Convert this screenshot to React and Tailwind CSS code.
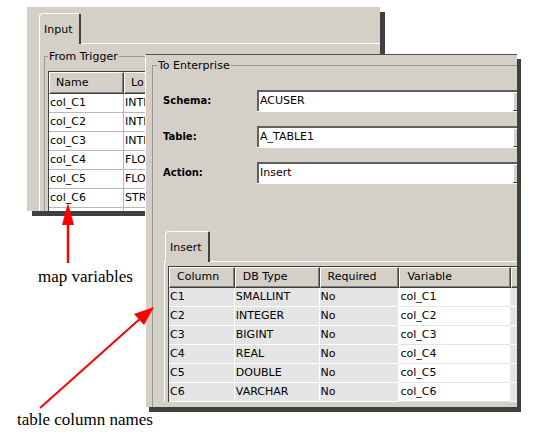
import React from 'react';

const ui = "font-['DejaVu_Sans',sans-serif] text-[11px] text-black";
const headCell = "flex items-center bg-[#d4d0c8] border-t border-l border-white border-r border-b border-r-[#404040] border-b-[#404040] shadow-[inset_-1px_-1px_0_#808080]";

const backRows = [
    ['col_C1', 'INTEGER'],
    ['col_C2', 'INTEGER'],
    ['col_C3', 'INTEGER'],
    ['col_C4', 'FLOAT'],
    ['col_C5', 'FLOAT'],
    ['col_C6', 'STRING'],
    ['', ''],
];

const frontRows = [
    ['C1', 'SMALLINT', 'No', 'col_C1'],
    ['C2', 'INTEGER', 'No', 'col_C2'],
    ['C3', 'BIGINT', 'No', 'col_C3'],
    ['C4', 'REAL', 'No', 'col_C4'],
    ['C5', 'DOUBLE', 'No', 'col_C5'],
    ['C6', 'VARCHAR', 'No', 'col_C6'],
];

const Combo = ({ value }) => (
    <div className="flex h-[21px] w-[272px] bg-white border-t-2 border-l-2 border-t-[#606060] border-l-[#606060] shadow-[0_1px_0_#ffffff]">
        <div className="flex-1 flex items-center pl-[1px]">{value}</div>
        <div className="w-[16px] flex items-center justify-center bg-[#d4d0c8] border-t border-l border-white border-r border-b border-r-[#404040] border-b-[#404040] text-[7px] leading-none">▼</div>
    </div>
);

const Tab = ({ label, w }) => (
    <div className={`relative z-10 -mb-px h-[31px] ${w} bg-[#d4d0c8] border-l border-t border-white border-r-2 border-r-[#404040] rounded-tl-[4px] rounded-tr-[2px] px-[4px] pt-[8px]`}>
        {label}
    </div>
);

const BackWindow = () => (
    <div className={`absolute left-[27px] top-[7px] w-[353px] h-[204px] bg-[#d4d0c8] shadow-[5px_5px_0_#404040] overflow-hidden ${ui}`}>
        <div className="pl-[12px] pt-[6px]">
            <Tab label="Input" w="w-[42px]" />
            <div className="h-[200px] border-l border-t border-white pl-[4px] pt-[6px]">
                <fieldset className="border border-[#9a978f] pl-[3px] h-[220px] w-[360px]">
                    <legend className="px-[1px] leading-[13px]">From Trigger</legend>
                    <div className="mt-[8px] w-[300px] bg-white border-t border-l border-[#404040]">
                        <div className="flex h-[22px]">
                            <div className={`${headCell} w-[75px] pl-[6px]`}>Name</div>
                            <div className={`${headCell} w-[100px] pl-[6px]`}>Lo</div>
                        </div>
                        {backRows.map((r, i) => (
                            <div key={i} className="flex h-[19px] border-b border-[#b8b8b8]">
                                <div className="w-[75px] pl-[1px] flex items-center border-r border-[#b8b8b8]">{r[0]}</div>
                                <div className="w-[100px] pl-[1px] flex items-center border-r border-[#b8b8b8]">{r[1]}</div>
                            </div>
                        ))}
                    </div>
                </fieldset>
            </div>
        </div>
    </div>
);

const FrontWindow = () => (
    <div className={`absolute left-[145px] top-[54px] w-[372px] h-[353px] bg-[#d4d0c8] border-t border-t-[#505050] border-l border-l-white shadow-[4px_5px_0_#404040] overflow-hidden ${ui}`}>
        <div className="pl-[6px] pt-[4px]">
            <fieldset className="border border-[#9a978f] shadow-[1px_1px_0_#ffffff] w-[420px] h-[400px] pl-[10px]">
                <legend className="px-[1px] -ml-[6px] leading-[13px]">To Enterprise</legend>
                <div className="mt-[18px] flex flex-col gap-[15px]">
                    {[['Schema:', 'ACUSER'], ['Table:', 'A_TABLE1'], ['Action:', 'Insert']].map(([l, v]) => (
                        <div key={l} className="flex items-center">
                            <div className="w-[94px] font-bold text-[10px]">{l}</div>
                            <Combo value={v} />
                        </div>
                    ))}
                </div>
                <div className="mt-[48px] ml-[1px]">
                    <div className="pl-[1px]">
                        <Tab label="Insert" w="w-[45px]" />
                    </div>
                    <div className="border-l border-t border-white pl-[3px] pt-[4px]">
                        <div className="w-[380px] border-t border-l border-[#404040]">
                            <div className="flex h-[21px]">
                                <div className={`${headCell} w-[66px] pl-[7px]`}>Column</div>
                                <div className={`${headCell} w-[85px] pl-[7px]`}>DB Type</div>
                                <div className={`${headCell} w-[80px] pl-[7px]`}>Required</div>
                                <div className={`${headCell} w-[112px] pl-[7px]`}>Variable</div>
                                <div className={`${headCell} w-[37px]`}></div>
                            </div>
                            {frontRows.map((r, i) => (
                                <div key={i} className="flex h-[19px]">
                                    <div className="w-[66px] pl-[1px] flex items-center bg-[#e4e4e4] border-r border-b border-white">{r[0]}</div>
                                    <div className="w-[85px] pl-[1px] flex items-center bg-[#e4e4e4] border-r border-b border-white">{r[1]}</div>
                                    <div className="w-[80px] pl-[1px] flex items-center bg-[#e4e4e4] border-r border-b border-white">{r[2]}</div>
                                    <div className="w-[112px] pl-[1px] flex items-center bg-white border-r border-b border-[#e4e4e4]">{r[3]}</div>
                                    <div className="w-[37px] bg-[#e4e4e4] border-b border-white"></div>
                                </div>
                            ))}
                        </div>
                    </div>
                </div>
            </fieldset>
        </div>
    </div>
);

export default function App() {
    return (
        <div className="relative w-[540px] h-[435px] bg-white overflow-hidden">
            <BackWindow />
            <FrontWindow />

            {/* annotation arrows */}
            <svg className="absolute inset-0 pointer-events-none" width="540" height="435" viewBox="0 0 540 435">
                <line x1="68" y1="263" x2="68" y2="222" stroke="#ff0000" strokeWidth="2.5" />
                <polygon points="62,225 74,225 68,203" fill="#ff0000" />
                <line x1="40" y1="408" x2="142" y2="317" stroke="#ff0000" strokeWidth="2" />
                <polygon points="154,307 144,325 134,314" fill="#ff0000" />
            </svg>

            <div className="absolute left-[38px] top-[267px] font-['Liberation_Serif',serif] text-[17px] leading-[20px] text-black">map variables</div>
            <div className="absolute left-[17px] top-[410px] font-['Liberation_Serif',serif] text-[17px] leading-[20px] text-black">table column names</div>
        </div>
    );
}
